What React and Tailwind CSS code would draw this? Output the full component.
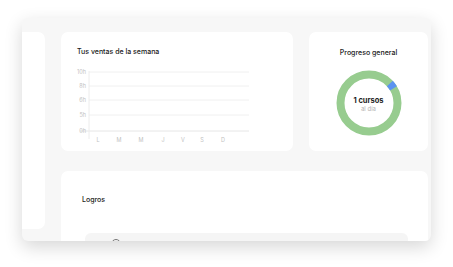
import React from 'react';

const days = ['L', 'M', 'M', 'J', 'V', 'S', 'D'];
const dayX = [28, 49, 71, 93, 113, 132, 153];
const ticks = [
  { label: '10h', y: 6 },
  { label: '8h', y: 20 },
  { label: '6h', y: 34 },
  { label: '5h', y: 49 },
  { label: '0h', y: 65 },
];

const WeekChart = () => (
  <svg width="200" height="82" viewBox="0 0 200 82" className="block">
    {ticks.map((t, i) => (
      <g key={t.label}>
        <line
          x1={i === ticks.length - 1 ? 10 : 19}
          x2="179"
          y1={t.y}
          y2={t.y}
          stroke={i === ticks.length - 1 ? '#e6e6e6' : '#f0f0f0'}
          strokeWidth="1"
        />
        <text x="16" y={t.y + 2} textAnchor="end" fontSize="5.5" fill="#c2c2c2">
          {t.label}
        </text>
      </g>
    ))}
    <line x1="19" x2="19" y1="5" y2="73" stroke="#ececec" strokeWidth="1" />
    {days.map((d, i) => (
      <text key={i} x={dayX[i]} y="76" textAnchor="middle" fontSize="5.5" fill="#c2c2c2">
        {d}
      </text>
    ))}
  </svg>
);

const Donut = () => {
  const r = 28.5;
  const c = 2 * Math.PI * r;
  const start = 47 / 360;
  const len = 12 / 360;
  return (
    <div className="relative w-[66px] h-[66px]">
      <svg width="66" height="66" viewBox="0 0 66 66" className="block -rotate-90">
        <circle cx="33" cy="33" r={r} fill="none" stroke="#97cc8f" strokeWidth="8" />
        <circle
          cx="33"
          cy="33"
          r={r}
          fill="none"
          stroke="#5b93f0"
          strokeWidth="8"
          strokeDasharray={`${len * c} ${c}`}
          strokeDashoffset={-start * c}
        />
      </svg>
      <div className="absolute inset-0 flex flex-col items-center justify-center pt-[1px]">
        <span className="text-[7.5px] leading-[9px] font-bold text-[#1c1c1c]">1 cursos</span>
        <span className="text-[6px] leading-[7px] text-[#b3b3b3]">al día</span>
      </div>
    </div>
  );
};

export default function App() {
  return (
    <div className="w-[453px] h-[267px] bg-white overflow-hidden font-['Inter',sans-serif]">
      <div className="ml-[22px] mt-[18px] w-[409px] h-[223px] rounded-[6px] overflow-hidden bg-[#f7f7f7] shadow-[0_6px_18px_rgba(0,0,0,0.16)] flex pt-[14px] pr-[3px]">
        {/* sidebar */}
        <div className="w-[23px] h-[197px] bg-white rounded-r-[7px] shrink-0" />

        <div className="ml-[16px] flex-1 flex flex-col gap-[20px]">
          <div className="flex gap-[16px]">
            {/* ventas */}
            <div className="w-[232px] h-[119px] bg-white rounded-[7px] pt-[15px] pl-[9px]">
              <div className="pl-[7px] text-[7px] leading-[10px] font-medium text-[#1a1a1a]">
                Tus ventas de la semana
              </div>
              <div className="mt-[9px]">
                <WeekChart />
              </div>
            </div>

            {/* progreso */}
            <div className="flex-1 h-[119px] bg-white rounded-[7px] pt-[16px] flex flex-col items-center">
              <div className="text-[7px] leading-[10px] font-medium text-[#1a1a1a]">Progreso general</div>
              <div className="mt-[12px]">
                <Donut />
              </div>
            </div>
          </div>

          {/* logros */}
          <div className="bg-white rounded-t-[7px] h-[80px] pt-[24px]">
            <div className="pl-[21px] text-[7px] leading-[10px] font-medium text-[#1a1a1a]">Logros</div>
            <div className="mt-[28px] ml-[24px] mr-[20px] h-[40px] bg-[#f5f5f5] rounded-[6px] flex items-start pt-[6px]">
              <div className="ml-[26px] w-[10px] h-[10px] rounded-full border border-[#777]" />
              <div className="ml-auto mr-[49px] mt-[2px] w-[3px] h-[3px] rounded-full bg-[#7cc46f]" />
            </div>
          </div>
        </div>
      </div>
    </div>
  );
}
